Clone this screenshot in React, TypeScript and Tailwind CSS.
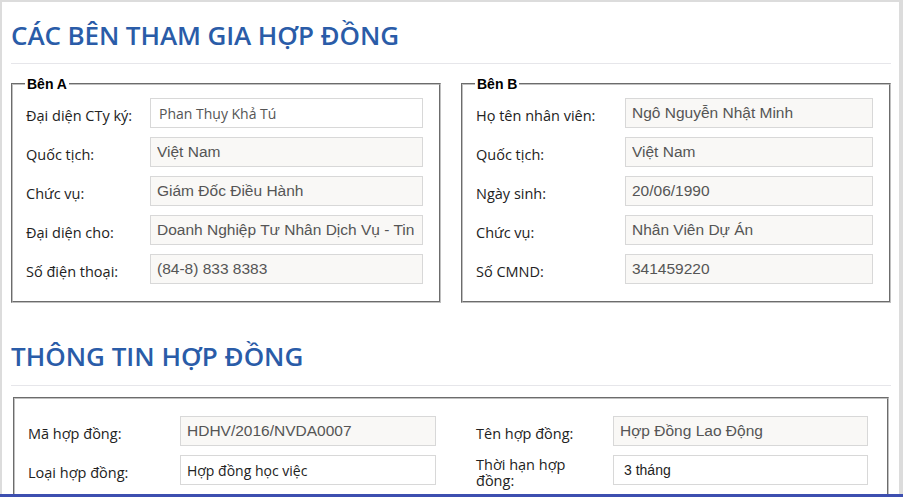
const label = "shrink-0 pt-[6px] font-['Open_Sans',sans-serif] text-[14.5px] leading-4 text-[#222]";
const box = "h-full min-w-0 border border-[#d8d8d8] outline-none";
const arial = "px-[6px] font-['Liberation_Sans',Arial,sans-serif] text-[15.5px]";
const readonly = `${box} ${arial} bg-[#f9f8f6] text-[#555]`;

type Row = { label: string; value: string; editable?: boolean };

const benA: Row[] = [
  { label: "Đại diện CTy ký:", value: "Phan Thụy Khả Tú", editable: true },
  { label: "Quốc tịch:", value: "Việt Nam" },
  { label: "Chức vụ:", value: "Giám Đốc Điều Hành" },
  { label: "Đại diện cho:", value: "Doanh Nghiệp Tư Nhân Dịch Vụ - Tin Học Hoàng Gia" },
  { label: "Số điện thoại:", value: "(84-8) 833 8383" },
];

const benB: Row[] = [
  { label: "Họ tên nhân viên:", value: "Ngô Nguyễn Nhật Minh" },
  { label: "Quốc tịch:", value: "Việt Nam" },
  { label: "Ngày sinh:", value: "20/06/1990" },
  { label: "Chức vụ:", value: "Nhân Viên Dự Án" },
  { label: "Số CMND:", value: "341459220" },
];

function Field({ row }: { row: Row }) {
  if (row.editable) {
    return (
      <input
        readOnly
        value={row.value}
        className={`${box} flex-1 bg-white pl-[8px] font-['Open_Sans',sans-serif] text-[14px] text-[#555]`}
      />
    );
  }
  return <input readOnly value={row.value} className={`${readonly} flex-1`} />;
}

function Party({ title, rows, labelWidth }: { title: string; rows: Row[]; labelWidth: string }) {
  return (
    <fieldset className="min-w-0 border-2 border-[#c0c0c0] pb-[17px] pl-[13px] pr-[16px] [border-style:groove]">
      <legend className="-ml-[1px] px-[2px] font-['Liberation_Sans',Arial,sans-serif] text-[14px] font-bold leading-4 text-black">
        {title}
      </legend>
      <div className="flex flex-col gap-[9px] pt-[6px]">
        {rows.map((r) => (
          <div key={r.label} className="flex h-[30px] items-center">
            <div className={`${label} ${labelWidth}`}>{r.label}</div>
            <Field row={r} />
          </div>
        ))}
      </div>
    </fieldset>
  );
}

function Heading({ children, className }: { children: string; className: string }) {
  return (
    <h2
      className={`h-[31px] font-['Open_Sans',sans-serif] text-[26px] font-semibold leading-[31px] text-[#2a5ca8] ${className}`}
    >
      {children}
    </h2>
  );
}

export default function App() {
  return (
    <div className="min-h-screen bg-[#dcdcdc] pt-[2px] pr-[4px] pl-[2px]">
      <main className="min-h-screen bg-white pr-[8px] pl-[9px] pt-[18px] pb-10">
        <Heading className="tracking-[-0.1px]">CÁC BÊN THAM GIA HỢP ĐỒNG</Heading>
        <div className="mt-[12px] h-px bg-[#e6e6ea]" />

        <div className="mt-[12px] grid grid-cols-2 gap-[20px]">
          <Party title="Bên A" rows={benA} labelWidth="w-[124px]" />
          <Party title="Bên B" rows={benB} labelWidth="w-[149px]" />
        </div>

        <Heading className="mt-[38px]">THÔNG TIN HỢP ĐỒNG</Heading>
        <div className="mt-[13px] h-px bg-[#e6e6ea]" />

        <fieldset className="mx-[2px] mt-[11px] min-w-0 border-2 border-[#c0c0c0] pb-[17px] pl-[13px] pr-[18px] pt-[17px] [border-style:groove]">
          <div className="flex flex-col gap-[9px]">
            <div className="flex h-[30px] items-center">
              <div className={`${label} w-[152px]`}>Mã hợp đồng:</div>
              <input readOnly value="HDHV/2016/NVDA0007" className={`${readonly} w-[256px]`} />
              <div className={`${label} ml-[40px] w-[137px] pr-[15px]`}>Tên hợp đồng:</div>
              <input readOnly value="Hợp Đồng Lao Động" className={`${readonly} w-[255px]`} />
            </div>
            <div className="flex h-[30px] items-center">
              <div className={`${label} w-[152px]`}>Loại hợp đồng:</div>
              <input
                readOnly
                value="Hợp đồng học việc"
                className={`${box} w-[256px] bg-white px-[6px] font-['Open_Sans',sans-serif] text-[14px] text-[#222]`}
              />
              <div className={`${label} ml-[40px] w-[137px] pr-[15px]`}>Thời hạn hợp đồng:</div>
              <div className="flex h-full w-[255px] items-center border border-[#d8d8d8] bg-white pl-[10px] font-['Liberation_Sans',Arial,sans-serif] text-[14px] text-[#222]">
                3 tháng
              </div>
            </div>
            <div className="flex h-[30px] items-center">
              <div className="w-[152px] shrink-0" />
              <input readOnly value="01/06/2016" className={`${readonly} w-[256px]`} />
              <div className="ml-[40px] w-[137px] shrink-0" />
              <input readOnly value="01/09/2016" className={`${readonly} w-[255px]`} />
            </div>
          </div>
        </fieldset>
      </main>
      <div className="fixed inset-x-0 bottom-0 h-[3px] bg-[#3d4fb0]" />
    </div>
  );
}
